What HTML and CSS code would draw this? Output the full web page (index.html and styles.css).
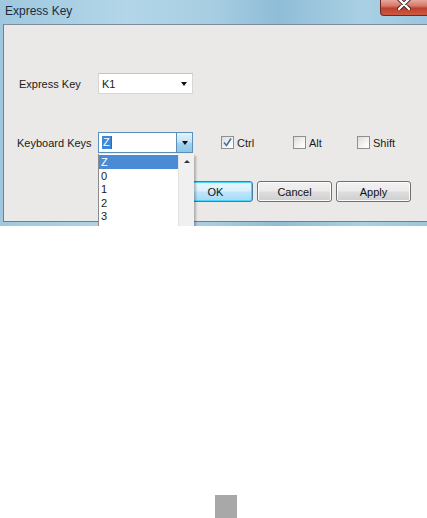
FILE: index.html
```html
<!DOCTYPE html>
<html lang="en">
<head>
  <meta charset="UTF-8" />
  <title>Express Key</title>
  <link rel="stylesheet" href="styles.css">
</head>
<body>
  <div class="window">
    <div class="titlebar">
      <span class="title">Express Key</span>
      <div class="close-btn">
        <svg width="14" height="12" viewBox="0 0 14 12">
          <path d="M2 1 L12 11 M12 1 L2 11" stroke="#3a2020" stroke-width="4.2" stroke-linecap="round"/>
          <path d="M2 1 L12 11 M12 1 L2 11" stroke="#ffffff" stroke-width="2.4" stroke-linecap="round"/>
        </svg>
      </div>
    </div>
    <div class="client">
      <div class="row">
        <label class="field-label">Express Key</label>
        <div class="combo">
          <span class="combo-text">K1</span>
          <span class="arrow"></span>
        </div>
      </div>

      <div class="row row-keys">
        <label class="field-label wide">Keyboard Keys</label>
        <div class="combo-wrap">
          <div class="combo focused">
            <span class="combo-text"><span class="sel">Z</span><span class="caret"></span></span>
            <span class="combo-btn"><span class="arrow"></span></span>
          </div>
          <div class="dropdown">
            <ul class="items">
              <li class="active">Z</li>
              <li>0</li>
              <li>1</li>
              <li>2</li>
              <li>3</li>
            </ul>
            <div class="scrollbar"><span class="arrow up"></span></div>
          </div>
        </div>
        <div class="checks">
          <label class="check"><span class="box checked">
            <svg width="11" height="11" viewBox="0 0 11 11"><path d="M2 5.5 L4.5 8.5 L9 1.5" fill="none" stroke="#4a6fa0" stroke-width="1.6"/></svg>
          </span>Ctrl</label>
          <label class="check"><span class="box"></span>Alt</label>
          <label class="check"><span class="box"></span>Shift</label>
        </div>
      </div>

      <div class="buttons">
        <button class="btn default">OK</button>
        <button class="btn">Cancel</button>
        <button class="btn">Apply</button>
      </div>
    </div>
  </div>
  <div class="page-mark"></div>
</body>
</html>
```

FILE: styles.css
```css
body {
  margin: 0;
  padding: 0;
  background: #ffffff;
  font-family: 'Liberation Sans', Arial, sans-serif;
  font-size: 11px;
  color: #1a1a1a;
}
.window {
  width: 427px;
  height: 226px;
  overflow: hidden;
  background: linear-gradient(90deg, #9fc8df 0%, #b3d6e8 30%, #a7cde2 50%, #8fbdd7 65%, #a9d0e4 85%, #9cc6de 100%);
  display: flex;
  flex-direction: column;
}
.titlebar {
  height: 24px;
  display: flex;
  align-items: flex-start;
  justify-content: space-between;
  flex-shrink: 0;
}
.title {
  font-size: 12px;
  color: #1c2c3c;
  padding: 4px 0 0 5px;
}
.close-btn {
  width: 48px;
  height: 16px;
  margin-right: -1px;
  border: 1px solid #6b2a25;
  border-top: none;
  border-right: none;
  border-bottom-left-radius: 4px;
  background: linear-gradient(180deg, #e8a79c 0%, #d3786a 40%, #c0402d 55%, #cc5a44 100%);
  display: flex;
  justify-content: center;
  align-items: flex-start;
  box-sizing: border-box;
  padding-right: 2px;
  overflow: hidden;
}
.close-btn svg {
  margin-top: -2px;
}
.client {
  flex: 1;
  margin-left: 3px;
  margin-bottom: 4px;
  border-left: 1px solid #6f7f8f;
  border-top: 1px solid #7c8c9c;
  border-bottom: 1px solid #6f7f8f;
  background: #ebe9e7;
  padding-top: 48px;
  position: relative;
}
.row {
  display: flex;
  align-items: center;
  height: 21px;
  padding-left: 15px;
}
.row-keys {
  margin-top: 38px;
}
.field-label {
  width: 79px;
  flex-shrink: 0;
}
.field-label.wide {
  margin-left: -2px;
  width: 81px;
}
.combo {
  width: 95px;
  height: 21px;
  flex-shrink: 0;
  box-sizing: border-box;
  background: #ffffff;
  border: 1px solid #d6d6d6;
  border-top-color: #c4c4c4;
  display: flex;
  align-items: center;
  justify-content: space-between;
  padding-left: 3px;
  padding-right: 5px;
}
.arrow {
  width: 0;
  height: 0;
  border-left: 3.5px solid transparent;
  border-right: 3.5px solid transparent;
  border-top: 4px solid #111;
}
.arrow.up {
  border-top: none;
  border-bottom: 3px solid #333;
  border-left-width: 3px;
  border-right-width: 3px;
}
.combo-wrap {
  position: relative;
  flex-shrink: 0;
}
.combo.focused {
  border-color: #5c8fb8;
  padding-right: 0;
}
.combo-text {
  display: flex;
  align-items: center;
}
.sel {
  background: #3b87d8;
  color: #ffffff;
  padding: 0 1px;
  line-height: 13px;
}
.caret {
  width: 1px;
  height: 13px;
  background: #c0401a;
}
.combo-btn {
  width: 16px;
  height: 19px;
  box-sizing: border-box;
  border-left: 1px solid #5c8fb8;
  background: linear-gradient(180deg, #e4f3fb 0%, #c4e4f6 45%, #a3d2ee 55%, #8ec6e8 100%);
  display: flex;
  align-items: center;
  justify-content: center;
}
.dropdown {
  position: absolute;
  left: 0;
  top: 22px;
  width: 95px;
  height: 80px;
  display: flex;
  background: #ffffff;
  border-left: 1px solid #8a8a8a;
  box-shadow: 2px 2px 2px rgba(0, 0, 0, 0.25);
  z-index: 5;
}
.items {
  list-style: none;
  margin: 0;
  padding: 1px 0 0;
  flex: 1;
}
.items li {
  height: 13.5px;
  line-height: 14px;
  padding-left: 2px;
}
.items li.active {
  background: #4a8bd6;
  color: #ffffff;
}
.scrollbar {
  width: 16px;
  background: #f0f0f0;
  border-left: 1px solid #e2e2e2;
  display: flex;
  justify-content: center;
  padding-top: 6px;
  box-sizing: border-box;
}
.checks {
  display: flex;
  margin-left: 28px;
}
.check {
  display: flex;
  align-items: center;
  width: 72px;
}
.check:nth-child(2) {
  width: 64px;
}
.box {
  width: 13px;
  height: 13px;
  box-sizing: border-box;
  border: 1px solid #8e8f8f;
  background: linear-gradient(135deg, #dcdcdc 0%, #f4f4f4 60%, #ffffff 100%);
  margin-right: 3px;
  display: flex;
  align-items: center;
  justify-content: center;
}
.buttons {
  display: flex;
  justify-content: flex-end;
  gap: 4px;
  margin-top: 28px;
  padding-right: 16px;
}
.btn {
  width: 75px;
  height: 21px;
  font-family: 'Liberation Sans', Arial, sans-serif;
  font-size: 11px;
  color: #111;
  border: 1px solid #707070;
  border-radius: 3px;
  background: linear-gradient(180deg, #f2f2f2 0%, #ebebeb 48%, #dddddd 52%, #cfcfcf 100%);
  box-shadow: inset 0 0 0 1px #fbfbfb;
  padding: 0;
}
.btn.default {
  border-color: #3c7fb1;
  background: linear-gradient(180deg, #eaf6fd 0%, #d9f0fc 48%, #bee6fd 52%, #a7d9f5 100%);
  box-shadow: inset 0 0 0 1px #48d4fb;
}
.page-mark {
  width: 22px;
  height: 23px;
  margin-top: 269px;
  margin-left: 215px;
  background: #a8a8a8;
}
```
